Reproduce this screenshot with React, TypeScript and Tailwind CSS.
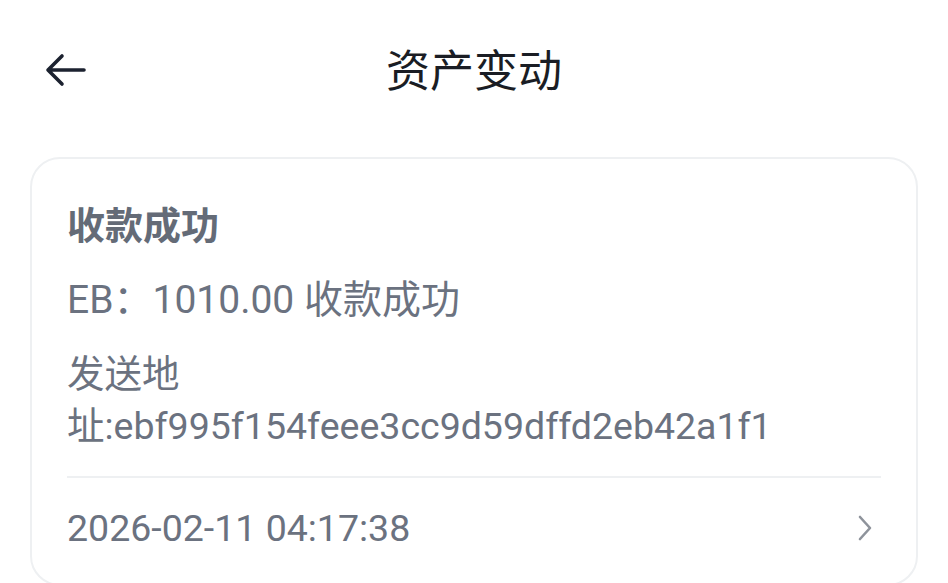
import React from 'react'

const font = { fontFamily: 'Roboto, "Noto Sans CJK SC", sans-serif' }

const BackIcon = () => (
  <svg width="44" height="36" viewBox="0 0 44 36" fill="none" className="block">
    <path
      d="M40 18H5M18 4L4 18l14 14"
      stroke="#1c2230"
      strokeWidth="3.6"
      strokeLinecap="round"
      strokeLinejoin="round"
    />
  </svg>
)

const ChevronIcon = () => (
  <svg width="16" height="28" viewBox="0 0 16 28" fill="none" className="block">
    <path
      d="M3 3l10 11L3 25"
      stroke="#8e939b"
      strokeWidth="2.6"
      strokeLinecap="round"
      strokeLinejoin="round"
    />
  </svg>
)

const App = () => {
  return (
    <div className="min-h-screen bg-white" style={font}>
      <div className="relative flex h-[144px] items-center justify-center">
        <button className="absolute left-[44px] top-[52px]">
          <BackIcon />
        </button>
        <h1 className="text-[44px] leading-none font-normal text-[#1a1d24]">资产变动</h1>
      </div>

      <div className="mx-[30px] mt-[13px] rounded-[30px] border-2 border-[#eef0f2] bg-white px-[35px] pt-[41px]">
        <div className="flex flex-col gap-[22px] pb-[24px]">
          <div className="text-[38px] font-bold leading-[52px] text-[#646b77]">收款成功</div>
          <div className="text-[39px] leading-[52px] text-[#6b7280]">EB：1010.00 收款成功</div>
          <div className="text-[37.5px] leading-[52px] text-[#6b7280]">
            发送地
            <br />
            址:ebf995f154feee3cc9d59dffd2eb42a1f1
          </div>
        </div>
        <div className="flex items-center justify-between border-t-2 border-[#eef0f2] pt-[24px] pb-[30px]">
          <span className="text-[37.5px] leading-[52px] text-[#6b7280]">2026-02-11 04:17:38</span>
          <span className="mr-[8px]">
            <ChevronIcon />
          </span>
        </div>
      </div>
    </div>
  )
}

export default App
